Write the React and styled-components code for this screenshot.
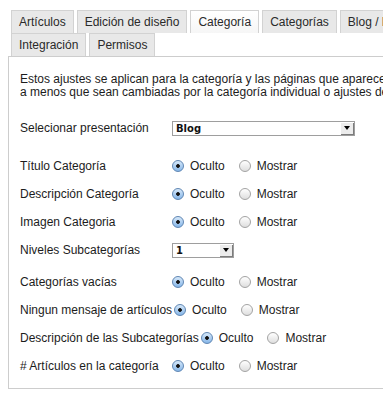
import React from "react";
import styled, { createGlobalStyle } from "styled-components";

const GlobalStyle = createGlobalStyle`
    body {
        margin: 0;
        background: #fff;
        overflow: hidden;
        font-family: "Liberation Sans", Arial, sans-serif;
        font-size: 12px;
        color: #1c1c1c;
    }
`

const Page = styled.div`
    width: 620px;
    padding: 10px 0 0 8px;
`

const TabRow = styled.div`
    display: flex;
    gap: 3px;
    padding-left: 3px;
`

const Tab = styled.div`
    height: 23px;
    box-sizing: border-box;
    padding: 0 7px;
    display: flex;
    align-items: center;
    white-space: nowrap;
    border: 1px solid #d2d2d2;
    border-bottom: none;
    color: #2a2a2a;
    background: ${p => p.$active ? "linear-gradient(#ffffff, #f6f6f6)" : "#e8e8e8"};
`

const Panel = styled.div`
    border: 1px solid #cdcdcd;
    padding: 16px 11px 8px;
`

const Intro = styled.p`
    margin: 0 0 15px;
    line-height: 13px;
    white-space: nowrap;
`

const Group = styled.div`
    margin-top: ${p => p.$gap || 0}px;
`

const Row = styled.div`
    display: flex;
    align-items: center;
    height: 28px;
    white-space: nowrap;
`

const Label = styled.span`
    display: inline-block;
    min-width: 150px;
`

const Radio = styled.input.attrs({ type: "radio" })`
    appearance: none;
    -webkit-appearance: none;
    width: 12px;
    height: 12px;
    box-sizing: border-box;
    border-radius: 50%;
    border: 1px solid #a3a3a3;
    background: linear-gradient(#ffffff, #dedede);
    margin: 0 6px 0 2px;

    &:checked {
        border-color: #5f86b3;
        background:
            radial-gradient(circle, #111 0 1.5px, transparent 2.2px),
            linear-gradient(#d6e8f9, #86b6e8);
    }
`

const Choice = styled.span`
    margin-right: 12px;
`

const Select = styled.div`
    width: ${p => p.$w}px;
    height: 15px;
    box-sizing: border-box;
    border: 1px solid #9e9e9e;
    background: #fff;
    display: flex;
    align-items: stretch;
    margin-left: 2px;
`

const SelectValue = styled.span`
    flex: 1;
    padding-left: 3px;
    font-family: "DejaVu Sans", sans-serif;
    font-size: 10px;
    font-weight: bold;
    line-height: 13px;
    color: #111;
`

const ArrowButton = styled.span`
    width: 14px;
    background: #ececec;
    box-shadow: inset 1px 1px #fff, inset -1px -1px #7c7c7c;
    display: flex;
    align-items: center;
    justify-content: center;

    &::after {
        content: "";
        border-left: 3px solid transparent;
        border-right: 3px solid transparent;
        border-top: 4px solid #000;
    }
`

function RadioRow({ label, name }) {
    return (
        <Row>
            <Label>{label}</Label>
            <Radio name={name} defaultChecked />
            <Choice>Oculto</Choice>
            <Radio name={name} />
            <span>Mostrar</span>
        </Row>
    )
}

function SelectRow({ label, value, width }) {
    return (
        <Row>
            <Label>{label}</Label>
            <Select $w={width}>
                <SelectValue>{value}</SelectValue>
                <ArrowButton />
            </Select>
        </Row>
    )
}

export default function App() {
    return (
        <>
            <GlobalStyle />
            <Page>
                <TabRow>
                    <Tab>Artículos</Tab>
                    <Tab>Edición de diseño</Tab>
                    <Tab $active>Categoría</Tab>
                    <Tab>Categorías</Tab>
                    <Tab>Blog / Destacados</Tab>
                </TabRow>
                <TabRow>
                    <Tab>Integración</Tab>
                    <Tab>Permisos</Tab>
                </TabRow>
                <Panel>
                    <Intro>
                        Estos ajustes se aplican para la categoría y las páginas que aparecen en ella,<br />
                        a menos que sean cambiadas por la categoría individual o ajustes del menú.
                    </Intro>

                    <SelectRow label="Selecionar presentación" value="Blog" width={183} />

                    <Group $gap={10}>
                        <RadioRow label="Título Categoría" name="titulo" />
                        <RadioRow label="Descripción Categoría" name="descripcion" />
                        <RadioRow label="Imagen Categoria" name="imagen" />
                        <SelectRow label="Niveles Subcategorías" value="1" width={62} />
                    </Group>

                    <Group $gap={4}>
                        <RadioRow label="Categorías vacías" name="vacias" />
                        <RadioRow label="Ningun mensaje de artículos" name="mensaje" />
                        <RadioRow label="Descripción de las Subcategorías" name="subdesc" />
                        <RadioRow label="# Artículos en la categoría" name="numero" />
                    </Group>
                </Panel>
            </Page>
        </>
    )
}
